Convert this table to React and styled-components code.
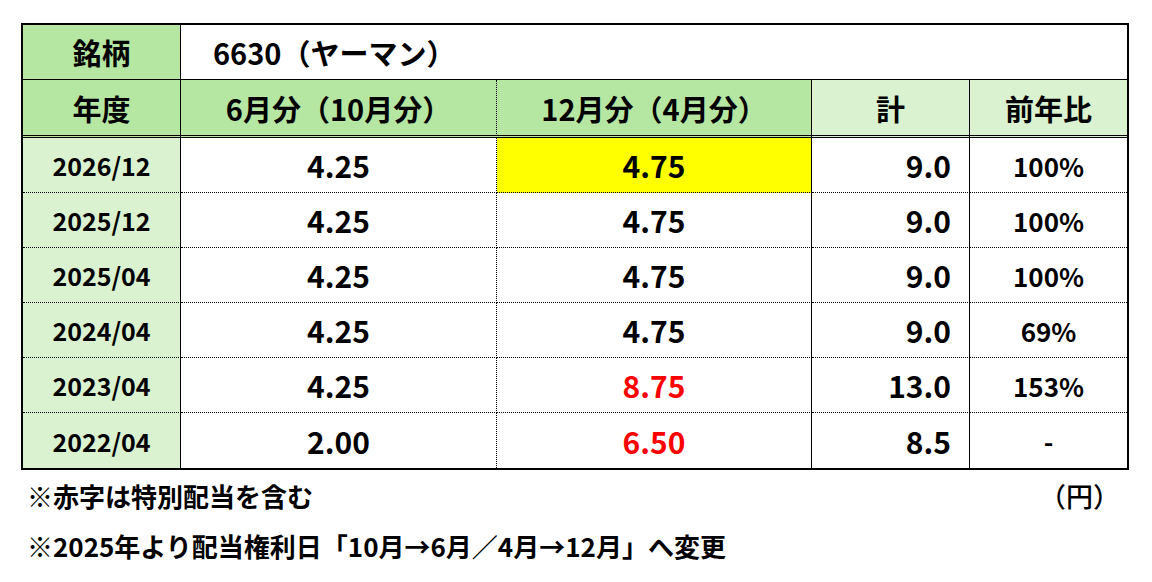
import React from "react";
import styled, { createGlobalStyle } from "styled-components";

const GlobalStyle = createGlobalStyle`
  body {
    margin: 0;
    background: #fff;
    font-family: "Noto Sans CJK JP", "Noto Sans", sans-serif;
    color: #000;
  }
`;

const DARK = "#b5e6a2";
const LIGHT = "#daf2d0";

const Page = styled.div`
  padding: 23px 0 0 21px;
  width: 1108px;
`;

const Grid = styled.div`
  display: grid;
  grid-template-columns: 158px 316px 315px 158px 157px;
  grid-template-rows: 55px 58px repeat(6, 55px);
  border: 2px solid #000;
  width: 1104px;
`;

const Cell = styled.div`
  box-sizing: border-box;
  display: flex;
  align-items: center;
  justify-content: ${(p) => p.$justify || "center"};
  padding: ${(p) => p.$pad || "0"};
  grid-column: ${(p) => p.$span || "auto"};
  background: ${(p) => p.$bg || "#fff"};
  color: ${(p) => p.$color || "#000"};
  font-size: ${(p) => p.$size || 30}px;
  font-weight: 700;
  white-space: nowrap;
  border-right: ${(p) => p.$right || "none"};
  border-bottom: ${(p) => p.$bottom || "none"};
`;

const Notes = styled.div`
  padding-left: 6px;
  width: 1101px;
  font-size: 26px;
  font-weight: 700;
`;

const NoteLine = styled.div`
  display: flex;
  justify-content: space-between;
  align-items: center;
  height: 50px;
`;

const Unit = styled.span`
  margin-right: 8px;
  font-size: 27px;
  font-weight: 500;
`;

const SOLID = "1px solid #000";
const DOT = "1px dotted #000";
const DOUBLE = "3px double #000";

const rows = [
  { year: "2026/12", a: "4.25", b: "4.75", sum: "9.0", ratio: "100%", hl: true },
  { year: "2025/12", a: "4.25", b: "4.75", sum: "9.0", ratio: "100%" },
  { year: "2025/04", a: "4.25", b: "4.75", sum: "9.0", ratio: "100%" },
  { year: "2024/04", a: "4.25", b: "4.75", sum: "9.0", ratio: "69%" },
  { year: "2023/04", a: "4.25", b: "8.75", sum: "13.0", ratio: "153%", red: true },
  { year: "2022/04", a: "2.00", b: "6.50", sum: "8.5", ratio: "-", red: true },
];

export default function App() {
  return (
    <Page>
      <GlobalStyle />
      <Grid>
        <Cell $bg={DARK} $size={29} $right={SOLID} $bottom={SOLID}>
          銘柄
        </Cell>
        <Cell $span="2 / span 4" $justify="flex-start" $pad="0 0 0 32px" $size={29} $bottom={SOLID}>
          6630（ヤーマン）
        </Cell>

        <Cell $bg={DARK} $size={29} $right={SOLID} $bottom={DOUBLE}>
          年度
        </Cell>
        <Cell $bg={DARK} $size={29} $right={DOT} $bottom={DOUBLE}>
          6月分（10月分）
        </Cell>
        <Cell $bg={DARK} $size={29} $right={SOLID} $bottom={DOUBLE}>
          12月分（4月分）
        </Cell>
        <Cell $bg={LIGHT} $size={29} $right={SOLID} $bottom={DOUBLE}>
          計
        </Cell>
        <Cell $bg={LIGHT} $size={29} $bottom={DOUBLE}>
          前年比
        </Cell>

        {rows.map((r, i) => {
          const last = i === rows.length - 1;
          const bottom = last ? "none" : DOT;
          return (
            <React.Fragment key={r.year}>
              <Cell $bg={LIGHT} $size={25} $right={SOLID} $bottom={bottom}>
                {r.year}
              </Cell>
              <Cell $right={DOT} $bottom={bottom}>
                {r.a}
              </Cell>
              <Cell
                $bg={r.hl ? "#ffff00" : "#fff"}
                $color={r.red ? "#ff0000" : "#000"}
                $right={SOLID}
                $bottom={bottom}
              >
                {r.b}
              </Cell>
              <Cell $justify="flex-end" $pad="0 18px 0 0" $right={SOLID} $bottom={bottom}>
                {r.sum}
              </Cell>
              <Cell $size={26} $bottom={bottom}>
                {r.ratio}
              </Cell>
            </React.Fragment>
          );
        })}
      </Grid>
      <Notes>
        <NoteLine>
          <span>※赤字は特別配当を含む</span>
          <Unit>（円）</Unit>
        </NoteLine>
        <NoteLine>
          <span>※2025年より配当権利日「10月→6月／4月→12月」へ変更</span>
        </NoteLine>
      </Notes>
    </Page>
  );
}
